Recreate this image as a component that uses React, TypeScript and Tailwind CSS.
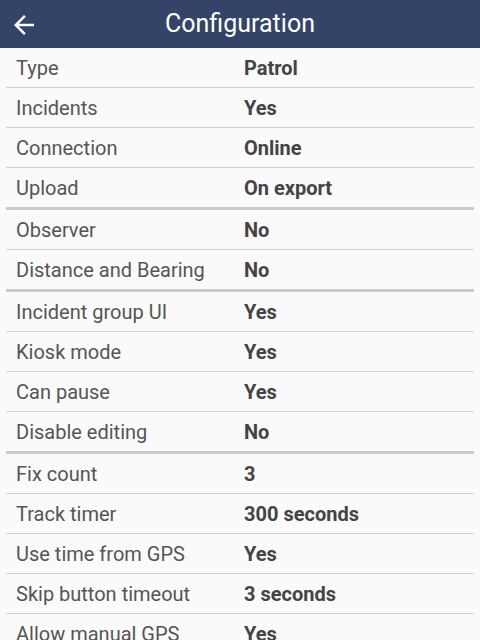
import React from "react";

type Row = { label: string; value: string; thick?: boolean };

const rows: Row[] = [
  { label: "Type", value: "Patrol" },
  { label: "Incidents", value: "Yes" },
  { label: "Connection", value: "Online" },
  { label: "Upload", value: "On export", thick: true },
  { label: "Observer", value: "No" },
  { label: "Distance and Bearing", value: "No", thick: true },
  { label: "Incident group UI", value: "Yes" },
  { label: "Kiosk mode", value: "Yes" },
  { label: "Can pause", value: "Yes" },
  { label: "Disable editing", value: "No", thick: true },
  { label: "Fix count", value: "3" },
  { label: "Track timer", value: "300 seconds" },
  { label: "Use time from GPS", value: "Yes" },
  { label: "Skip button timeout", value: "3 seconds" },
  { label: "Allow manual GPS", value: "Yes" },
];

export default function App() {
  return (
    <div
      className="w-[480px] h-[640px] overflow-hidden bg-[#fafafa]"
      style={{ fontFamily: "Roboto, 'Liberation Sans', sans-serif" }}
    >
      <div className="h-[48px] bg-[#334468] flex items-center relative">
        <svg
          className="absolute left-[9px] top-[10px]"
          width="30"
          height="30"
          viewBox="0 0 24 24"
          fill="white"
        >
          <path d="M20 11H7.83l5.59-5.59L12 4l-8 8 8 8 1.41-1.41L7.83 13H20v-2z" />
        </svg>
        <div className="flex-1 text-center text-white text-[25px] leading-[48px]">
          Configuration
        </div>
      </div>
      <div className="px-[6px]">
        {rows.map((r) => (
          <div
            key={r.label}
            className={
              r.thick
                ? "h-[42px] flex items-center border-b-[3px] border-[#cccccc]"
                : "h-[40px] flex items-center border-b border-[#d0d0d0]"
            }
          >
            <div className="w-[238px] shrink-0 pl-[10px] text-[20px] text-[#555555] whitespace-nowrap">
              {r.label}
            </div>
            <div className="text-[20px] font-bold text-[#444444] whitespace-nowrap">
              {r.value}
            </div>
          </div>
        ))}
      </div>
    </div>
  );
}
